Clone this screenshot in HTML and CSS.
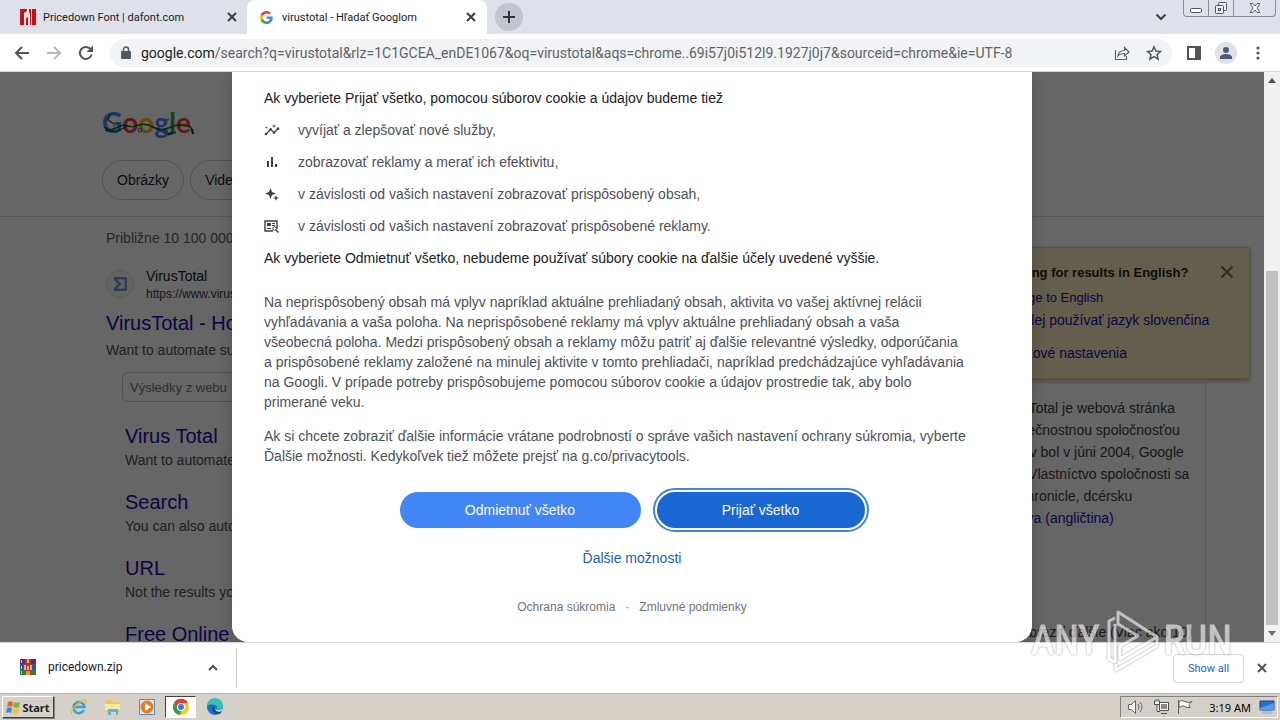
FILE: index.html
```html
<!DOCTYPE html>
<html lang="sk">
<head>
<meta charset="utf-8">
<title>virustotal - Hľadať Googlom</title>
<link rel="stylesheet" href="styles.css">
</head>
<body>
<header class="tabstrip">
  <div class="tab">
    <svg class="favicon" viewBox="0 0 16 16"><path fill="#c4101a" d="M0 0h16v16H0z"/><path fill="#fff" d="M4 4l3-2V0h2v3l1 2v11H8V8L6 9v7H4zM11 0h1v16h-1z" opacity=".9"/></svg>
    <span class="tab-title">Pricedown Font | dafont.com</span>
    <button class="icon-btn" aria-label="Close tab"><svg width="10" height="10" viewBox="0 0 10 10"><path d="M1 1l8 8M9 1l-8 8" stroke="#3c4043" stroke-width="2"/></svg></button>
  </div>
  <div class="tab tab-active">
    <svg class="favicon g-icon" viewBox="0 0 48 48"><path fill="#ea4335" d="M24 9.500c3.540 0 6.710 1.220 9.210 3.600l6.850-6.850C35.900 2.380 30.470 0 24 0 14.620 0 6.510 5.380 2.560 13.220l7.980 6.190C12.430 13.720 17.740 9.500 24 9.500z"/><path fill="#4285f4" d="M46.980 24.550c0-1.570-.15-3.090-.38-4.550H24v9.020h12.940c-.58 2.960-2.260 5.480-4.780 7.180l7.730 6c4.510-4.180 7.090-10.360 7.090-17.650z"/><path fill="#fbbc05" d="M10.530 28.590a14.500 14.500 0 010-9.180l-7.980-6.190a24 24 0 000 21.560z"/><path fill="#34a853" d="M24 48c6.480 0 11.930-2.130 15.890-5.810l-7.730-6c-2.150 1.450-4.920 2.300-8.160 2.300-6.260 0-11.570-4.220-13.470-9.910l-7.980 6.190C6.510 42.620 14.620 48 24 48z"/></svg>
    <span class="tab-title">virustotal - Hľadať Googlom</span>
    <button class="icon-btn" aria-label="Close tab"><svg width="10" height="10" viewBox="0 0 10 10"><path d="M1 1l8 8M9 1l-8 8" stroke="#3c4043" stroke-width="2"/></svg></button>
  </div>
  <button class="new-tab" aria-label="New tab"><svg width="12" height="12" viewBox="0 0 12 12"><path d="M6 0v12M0 6h12" stroke="#303338" stroke-width="2"/></svg></button>
  <div class="spacer"></div>
  <button class="icon-btn tab-search" aria-label="Search tabs"><svg width="12" height="8" viewBox="0 0 12 8"><path d="M1.500 1.500L6 6l4.500-4.500" fill="none" stroke="#3c4043" stroke-width="2"/></svg></button>
  <div class="win-controls">
    <button aria-label="Minimize"><svg width="14" height="14" viewBox="0 0 14 14"><rect x="1.500" y="7.500" width="11" height="4" rx="1" fill="#fff" stroke="#50545c"/></svg></button>
    <button aria-label="Restore"><svg width="14" height="14" viewBox="0 0 14 14"><g fill="#eef0f4" stroke="#50545c"><rect x="4.500" y="1.500" width="8" height="8" rx="1"/><rect x="1.500" y="4.500" width="8" height="8" rx="1"/><rect x="4.500" y="7.500" width="2" height="2"/></g></svg></button>
    <button class="wide" aria-label="Close"><svg width="14" height="14" viewBox="0 0 14 14"><path d="M2 2.500h3l2 2.500 2-2.500h3L9 7l3 4.500H9L7 9l-2 2.500H2L5 7z" fill="#f4f5f8" stroke="#60646c"/></svg></button>
  </div>
</header>

<nav class="toolbar">
  <button class="icon-btn nav-btn" aria-label="Back"><svg width="16" height="16" viewBox="0 0 16 16"><path d="M15 8H2.500M8 2L2 8l6 6" fill="none" stroke="#505357" stroke-width="2"/></svg></button>
  <button class="icon-btn nav-btn" aria-label="Forward"><svg width="16" height="16" viewBox="0 0 16 16"><path d="M1 8h12.500M8 2l6 6-6 6" fill="none" stroke="#b7b9bc" stroke-width="2"/></svg></button>
  <button class="icon-btn nav-btn" aria-label="Reload"><svg width="16" height="16" viewBox="0 0 16 16"><path d="M13.700 9.500A6 6 0 1112.300 3.800" fill="none" stroke="#505357" stroke-width="2"/><path d="M15 .5V7H8.500z" fill="#505357"/></svg></button>
  <div class="omnibox">
    <svg width="10" height="14" viewBox="0 0 10 14"><rect y="5" x="0" width="10" height="8" rx="1" fill="#55585c"/><path d="M2.500 6V3.500a2.500 2.500 0 015 0V6" fill="none" stroke="#55585c" stroke-width="1.500"/></svg>
    <span class="url"><b>google.com</b>/search?q=virustotal&amp;rlz=1C1GCEA_enDE1067&amp;oq=virustotal&amp;aqs=chrome..69i57j0i512l9.1927j0j7&amp;sourceid=chrome&amp;ie=UTF-8</span>
    <button class="icon-btn" aria-label="Share"><svg width="16" height="16" viewBox="0 0 16 16"><path d="M1.500 5v9.500h11V11M4 11c.5-4 3-5.500 6.500-5.500V2.500L15 7l-4.500 4V8.500C7.500 8.500 5.500 9 4 11z" fill="none" stroke="#5f6368" stroke-width="1.200"/></svg></button>
    <button class="icon-btn" aria-label="Bookmark"><svg width="16" height="16" viewBox="0 0 16 16"><path d="M8 1.800l1.900 4.300 4.600.4-3.500 3 1.100 4.600L8 11.700l-4.100 2.400L5 9.500l-3.500-3 4.600-.4z" fill="none" stroke="#505357" stroke-width="1.500"/></svg></button>
  </div>
  <button class="icon-btn side-btn" aria-label="Side panel"><svg width="14" height="14" viewBox="0 0 14 14"><path d="M1 1h12v12H1z" fill="#fff" stroke="#505357" stroke-width="2"/><path d="M8 0h6v14H8z" fill="#505357"/></svg></button>
  <button class="avatar" aria-label="Profile"><svg width="14" height="14" viewBox="0 0 14 14" fill="#4c5a78"><circle cx="7" cy="4" r="3"/><path d="M1 13v-2c0-2 4-3 6-3s6 1 6 3v2z"/></svg></button>
  <button class="icon-btn menu-btn" aria-label="Menu"><svg width="4" height="14" viewBox="0 0 4 14" fill="#505357"><circle cx="2" cy="2" r="1.600"/><circle cx="2" cy="7" r="1.600"/><circle cx="2" cy="12" r="1.600"/></svg></button>
</nav>

<main class="viewport">
  <div class="page">
    <div class="results-page">
      <div class="page-head">
        <div class="logo"><span class="c-b">G</span><span class="c-r">o</span><span class="c-y">o</span><span class="c-b">g</span><span class="c-g">l</span><span class="c-r">e</span>
          <svg class="garland" viewBox="0 0 94 36" fill="none"><path d="M2 23c5 5 10 2 16-1s10 3 16 0 12-2 17 1 12 3 18 0 10-2 19 0" stroke="#1f5a38" stroke-width="1.500"/><path d="M3 26c8 4 16 0 22-4M8 10l-2 6 6 4M88 22l3 7" stroke="#235c60" stroke-width="1.500"/><path d="M61 28c4 3 9 2 13 0" stroke="#3878a0" stroke-width="2"/><g fill="#e0a020"><circle cx="12" cy="22" r="1"/><circle cx="30" cy="23" r="1"/><circle cx="48" cy="23" r="1"/><circle cx="81" cy="22" r="1"/></g><circle cx="38" cy="26" r="2" stroke="#315cb0"/><path d="M66 31l5-3M90 25l1 5" stroke="#16351f" stroke-width="2"/></svg>
        </div>
        <div class="chips"><a href="#">Obrázky</a><a href="#">Videá</a></div>
      </div>
      <div class="columns">
        <div class="left">
          <p class="stats">Približne 10 100 000 výsledkov</p>
          <div class="site">
            <svg width="28" height="28" viewBox="0 0 28 28"><circle cx="14" cy="14" r="13.500" fill="#f8f8fa" stroke="#dadce0"/><path d="M8 7h13v14H8v-3l4-4-4-4zM11 9.500l4.500 4.500-4.500 4.500h7.500v-9z" fill="#7898cc" fill-rule="evenodd"/></svg>
            <div><div class="site-name">VirusTotal</div><div class="site-url">https://www.virustotal.com</div></div>
          </div>
          <a class="title" href="#">VirusTotal - Home</a>
          <p class="desc">Want to automate submissions?</p>
          <input class="site-search" type="text" placeholder="Výsledky z webu" aria-label="Výsledky z webu">
          <div class="sitelinks">
            <div><a class="title" href="#">Virus Total</a><p class="desc">Want to automate</p></div>
            <div><a class="title" href="#">Search</a><p class="desc">You can also automate</p></div>
            <div><a class="title" href="#">URL</a><p class="desc">Not the results you</p></div>
            <div><a class="title" href="#">Free Online</a></div>
          </div>
        </div>
        <aside class="right">
          <section class="lang-card">
            <div class="lang-text">
              <strong>Looking for results in English?</strong>
              <a class="small" href="#">Change to English</a>
              <a href="#">Naďalej používať jazyk slovenčina</a>
              <a class="last" href="#">Jazykové nastavenia</a>
            </div>
            <button class="icon-btn" aria-label="Zavrieť"><svg width="14" height="14" viewBox="0 0 14 14"><path d="M1.500 1.500l11 11M12.500 1.500l-11 11" stroke="#806f50" stroke-width="2"/></svg></button>
          </section>
          <section class="panel">
            <p>VirusTotal je webová stránka<br>bezpečnostnou spoločnosťou<br>Názov bol v júni 2004, Google<br>roku Vlastníctvo spoločnosti sa<br>na Chronicle, dcérsku<br><a href="#">Správa (angličtina)</a></p>
            <p class="more">Zobraziť ďalšie (Viac ako 10)</p>
          </section>
        </aside>
      </div>
    </div>
    <div class="scrim">
      <div class="dialog" role="dialog" aria-label="Súbory cookie">
        <p class="lead">Ak vyberiete Prijať všetko, pomocou súborov cookie a údajov budeme tiež</p>
        <ul>
          <li><svg width="16" height="16" viewBox="0 0 24 24"><path fill="#3c4043" d="M21 8c-1.450 0-2.260 1.440-1.930 2.510l-3.550 3.560c-.3-.09-.74-.09-1.040 0l-2.550-2.550C12.270 10.450 11.460 9 10 9c-1.450 0-2.270 1.440-1.930 2.520l-4.560 4.550C2.440 15.740 1 16.550 1 18c0 1.100.9 2 2 2 1.450 0 2.260-1.440 1.930-2.510l4.550-4.560c.3.090.74.090 1.040 0l2.550 2.550C12.730 16.550 13.540 18 15 18c1.450 0 2.270-1.440 1.930-2.520l3.560-3.550C21.560 12.260 23 11.450 23 10c0-1.100-.9-2-2-2zM15 9l.94-2.070L18 6l-2.060-.93L15 3l-.92 2.070L12 6l2.080.93zM3.500 11L4 9l2-.5L4 8l-.5-2L3 8l-2 .5L3 9z"/></svg>vyvíjať a zlepšovať nové služby,</li>
          <li><svg width="16" height="16" viewBox="0 0 16 16"><path fill="#3c4043" d="M3 7h2v6H3zM7 3h2v10H7zM11 10h2v3h-2z"/></svg>zobrazovať reklamy a merať ich efektivitu,</li>
          <li><svg width="16" height="16" viewBox="0 0 16 16"><path fill="#3c4043" d="M6.500 2L8 6l4 1.500L8 9l-1.500 4L5 9 1 7.500 5 6zM12 9l.8 2.200L15 12l-2.200.8L12 15l-.8-2.200L9 12l2.200-.8z"/></svg>v závislosti od vašich nastavení zobrazovať prispôsobený obsah,</li>
          <li><svg width="16" height="16" viewBox="0 0 16 16" fill="none" stroke="#3c4043"><path d="M9 13H1V3h12v8" stroke-width="1.400"/><path d="M3 5h4v3H3z" fill="#3c4043" stroke="none"/><path d="M8 5.500h3M8 7.500h3M3 10.500h4"/><circle cx="10.500" cy="10.500" r="1.800"/><path d="M12 12l2.500 2.500" stroke-width="1.500"/></svg>v závislosti od vašich nastavení zobrazovať prispôsobené reklamy.</li>
        </ul>
        <p class="lead">Ak vyberiete Odmietnuť všetko, nebudeme používať súbory cookie na ďalšie účely uvedené vyššie.</p>
        <p class="body-text first">Na neprispôsobený obsah má vplyv napríklad aktuálne prehliadaný obsah, aktivita vo vašej aktívnej relácii<br>vyhľadávania a vaša poloha. Na neprispôsobené reklamy má vplyv aktuálne prehliadaný obsah a vaša<br>všeobecná poloha. Medzi prispôsobený obsah a reklamy môžu patriť aj ďalšie relevantné výsledky, odporúčania<br>a prispôsobené reklamy založené na minulej aktivite v tomto prehliadači, napríklad predchádzajúce vyhľadávania<br>na Googli. V prípade potreby prispôsobujeme pomocou súborov cookie a údajov prostredie tak, aby bolo<br>primerané veku.</p>
        <p class="body-text">Ak si chcete zobraziť ďalšie informácie vrátane podrobností o správe vašich nastavení ochrany súkromia, vyberte<br>Ďalšie možnosti. Kedykoľvek tiež môžete prejsť na g.co/privacytools.</p>
        <div class="actions">
          <button class="pill reject">Odmietnuť všetko</button>
          <button class="pill accept">Prijať všetko</button>
        </div>
        <a class="more-options" href="#">Ďalšie možnosti</a>
        <div class="legal"><a href="#">Ochrana súkromia</a><span>·</span><a href="#">Zmluvné podmienky</a></div>
      </div>
    </div>
  </div>
  <div class="scrollbar">
    <svg width="8" height="5" viewBox="0 0 8 5"><path d="M0 5l4-5 4 5z" fill="#505050"/></svg>
    <div class="track"><div class="thumb"></div></div>
    <svg width="8" height="5" viewBox="0 0 8 5"><path d="M0 0l4 5 4-5z" fill="#707070"/></svg>
  </div>
</main>

<section class="shelf">
  <div class="download">
    <svg width="16" height="16" viewBox="0 0 16 16"><path fill="#7a2060" d="M0 0h16v5H0z"/><path fill="#2858a8" d="M0 5h16v6H0z"/><path fill="#28803c" d="M0 11h16v5H0z"/><path fill="#c43030" d="M5 0h6v16H5z"/><path fill="#e8b080" d="M4 6h2v5H4zM10 6h2v5h-2zM7 7h2v4H7zM7 0h2v4H7z"/><path fill="#d8a030" d="M6 12h4v4H6z"/><path fill="#d8c8b0" d="M1 1h1v3H1zM1 7h1v3H1zM1 12h1v3H1z"/></svg>
    <span>pricedown.zip</span>
    <button class="icon-btn" aria-label="Options"><svg width="10" height="7" viewBox="0 0 10 7"><path d="M1 6l4-4 4 4" fill="none" stroke="#505357" stroke-width="2"/></svg></button>
  </div>
  <button class="show-all">Show all</button>
  <button class="icon-btn" aria-label="Close downloads"><svg width="10" height="10" viewBox="0 0 10 10"><path d="M1 1l8 8M9 1l-8 8" stroke="#505357" stroke-width="2"/></svg></button>
</section>

<footer class="taskbar">
  <button class="start"><svg width="15" height="15" viewBox="0 0 15 15"><path fill="#e8602c" d="M2 2c2-1 3-1 5 0L6 7C4 6 3 6 1 7z"/><path fill="#78b83c" d="M8 2c2 1 4 1 6 0l-1 5c-2 1-4 1-6 0z"/><path fill="#3c88d8" d="M1 8c2-1 3-1 5 0l-1 5c-2-1-3-1-5 0z"/><path fill="#f4c030" d="M7 8c2 1 4 1 6 0l-1 5c-2 1-4 1-6 0z"/></svg>Start</button>
  <button class="task" aria-label="Internet Explorer"><svg width="18" height="18" viewBox="0 0 18 18" fill="none"><path d="M14 12a5.500 5.500 0 11.500-3H5" stroke="#38a0dc" stroke-width="2.500"/><path d="M2 16c-3-3 9-15 14-14 1 1 0 2-1 3" stroke="#e8b830" stroke-width="1.300"/></svg></button>
  <button class="task" aria-label="Explorer"><svg width="18" height="18" viewBox="0 0 18 18"><path fill="#e8c860" d="M1 4l1-2h5l1 2h8v10H1z"/><path fill="#f8e8a0" d="M1 6h15v6H1z"/><path fill="#68b0d8" d="M4 17v-6h10v6h-2v-3H7v3z"/></svg></button>
  <button class="task" aria-label="Media Player"><svg width="18" height="18" viewBox="0 0 18 18"><path fill="#d8e8f4" stroke="#5890c0" d="M1.500 1.500h15v15h-15z"/><circle cx="9" cy="9" r="6.500" fill="#ec7c18"/><path fill="#fff" d="M7 5l6 4-6 4z"/></svg></button>
  <button class="task task-active" aria-label="Chrome"><svg width="18" height="18" viewBox="0 0 18 18"><circle cx="9" cy="9" r="8" fill="#f8c820"/><path fill="#e04030" d="M2 5a8 8 0 0114 0H9L5.500 11z"/><path fill="#28a050" d="M2 5l4.500 7L9 13l-1 4A8 8 0 012 5z"/><circle cx="9" cy="9" r="4" fill="#fff"/><circle cx="9" cy="9" r="3" fill="#3c78e0"/></svg></button>
  <button class="task" aria-label="Edge"><svg width="18" height="18" viewBox="0 0 18 18"><circle cx="9" cy="9" r="8" fill="#1878c8"/><path fill="#38c0b0" d="M1 8a8 8 0 0116 0c0 4-6 4-6 2 1-3-5-5-10-2z"/><path fill="#144c98" d="M7 8c-3 4 0 8 5 8 2 0 3-1 4-3-4 2-8 0-7-3 0-1-1-2-2-2z"/><path fill="#d5d0c8" d="M10 8c-2 3 1 5 7 3l-1 2c-5 2-8-1-6-5z"/></svg></button>
  <div class="spacer"></div>
  <div class="tray">
    <svg width="18" height="16" viewBox="0 0 18 16" fill="none" stroke="#686868"><path d="M1.500 5.500h3l4-4v13l-4-4h-3z" fill="#fff"/><path d="M11 5q2 3 0 6M13 3q4 5 0 10"/></svg>
    <svg width="16" height="16" viewBox="0 0 16 16" fill="#fff" stroke="#505050"><path d="M6.500 3.500h9v8h-9zM8 14.500h6M1.500 1.500v4h5v-4M4 5.500v7h3M3 0v3M5 0v3"/><path d="M8 5h6v5H8z" fill="#888" stroke="none"/></svg>
    <svg width="16" height="16" viewBox="0 0 16 16" fill="#fff" stroke="#606060"><path d="M1.500 1v14M2 2.500q3-2 6 0t7 0l-3 3 1 3q-3 1-5-1t-6 1z"/></svg>
    <span>3:19 AM</span>
    <svg width="16" height="14" viewBox="0 0 16 14"><path d="M1 1h14v9H1z" fill="#2870d0" stroke="#184080"/><path d="M1 8L15 3v7H1z" fill="#50a0e8"/><path d="M4 11h8l2 3H2z" fill="#a8c0d8"/></svg>
  </div>
</footer>

<div class="watermark" aria-hidden="true"><span>ANY</span>
  <svg width="54" height="62" viewBox="0 0 54 62" fill="none" stroke="#fff" stroke-width="3" stroke-linejoin="round"><path d="M10 8l-6 3v38l6 3V14M13 2l39 25-37 22V36l18-10-20-12zM11 54v6l41-24v-8"/></svg>
  <span>RUN</span></div>
</body>
</html>
```

FILE: styles.css
```css
* { box-sizing: border-box; }
body {
  margin: 0;
  height: 100vh;
  display: flex;
  flex-direction: column;
  overflow: hidden;
  position: relative;
  font-family: "Liberation Sans", Arial, sans-serif;
  font-size: 14px;
  color: #202124;
}
button { border: 0; padding: 0; margin: 0; background: none; font: inherit; color: inherit; }
a { text-decoration: none; color: inherit; }
p, ul { margin: 0; padding: 0; }
svg { display: block; flex: none; }
.spacer { flex: 1; }
.icon-btn { flex: none; display: flex; align-items: center; justify-content: center; }

.tabstrip {
  height: 34px;
  flex: none;
  display: flex;
  align-items: center;
  background: #dee1e9;
  font-family: Roboto, sans-serif;
  font-size: 11px;
}
.tab { width: 247px; height: 34px; padding: 0 10px 0 20px; display: flex; align-items: center; gap: 7px; }
.tab-active { width: 240px; padding: 0 11px 0 13px; background: #fff; border-radius: 8px 8px 0 0; }
.tab-title { flex: 1; white-space: nowrap; }
.favicon { width: 16px; height: 16px; }
.g-icon { width: 13px; height: 13px; margin-right: 2px; }
.new-tab { width: 28px; height: 28px; margin-left: 8px; border-radius: 50%; background: #c2c5ce; display: flex; align-items: center; justify-content: center; }
.tab-search { margin-right: 16px; }
.win-controls { align-self: flex-start; height: 17px; margin-right: 4px; display: flex; border: 1px solid #888c96; border-top: 0; border-radius: 0 0 4px 4px; }
.win-controls button { width: 25px; display: flex; align-items: center; justify-content: center; border-right: 1px solid #888c96; }
.win-controls .wide { width: 41px; border-right: 0; }

.toolbar {
  height: 38px;
  flex: none;
  display: flex;
  align-items: center;
  padding: 0 14px;
  background: #fff;
  border-bottom: 1px solid #d4d6d9;
}
.nav-btn { width: 16px; margin-right: 16px; }
.omnibox { flex: 1; height: 28px; display: flex; align-items: center; gap: 16px; padding: 0 10px 0 11px; border-radius: 14px; background: #f1f3f4; }
.url { flex: 1; margin-left: -6px; font-family: Roboto, sans-serif; font-size: 14px; color: #5f6368; white-space: nowrap; }
.url b { font-weight: 400; color: #202124; }
.side-btn { margin: 0 14px 0 15px; }
.avatar { width: 22px; height: 22px; border-radius: 50%; background: #dde1e8; display: flex; align-items: center; justify-content: center; }
.menu-btn { width: 16px; margin: 0 0 0 13px; }

.viewport { flex: 1; min-height: 0; display: flex; }
.page { flex: 1; min-width: 0; position: relative; overflow: hidden; background: #fff; }
.page-head { height: 145px; padding: 32px 0 0 102px; border-bottom: 1px solid #dadce0; }
.logo { position: relative; width: 94px; height: 36px; font: 700 28px/36px Lato, sans-serif; }
.garland { position: absolute; inset: 0; }
.c-b { color: #4285f4; } .c-r { color: #ea4335; } .c-y { color: #fbbc05; } .c-g { color: #34a853; }
.chips { display: flex; gap: 6px; margin-top: 20px; }
.chips a { height: 40px; padding: 0 14px; line-height: 38px; border: 1px solid #c8cace; border-radius: 20px; }
.columns { display: flex; justify-content: space-between; padding: 0 14px 0 106px; white-space: nowrap; }
.left { width: 540px; }
.stats { margin-top: 11px; line-height: 20px; color: #5f6368; }
.site { display: flex; align-items: center; gap: 12px; margin-top: 18px; }
.site-name { line-height: 20px; }
.site-url { font-size: 12px; line-height: 16px; color: #3c4043; }
.title { display: block; font-size: 20px; line-height: 26px; color: #1a0dab; }
.site + .title { margin-top: 8px; }
.desc { line-height: 22px; color: #4d5156; }
.title + .desc { margin-top: 3px; }
.site-search { display: block; width: 280px; height: 30px; margin: 11px 0 0 16px; padding: 0 7px; border: 1px solid #c8cace; border-radius: 6px; background: #fff; font: 13px "Liberation Sans", sans-serif; }
.site-search::placeholder { color: #70757a; }
.sitelinks { display: flex; flex-direction: column; gap: 18px; padding: 21px 0 0 19px; }
.sitelinks .desc { margin-top: 0; }
.right { width: 270px; padding-top: 30px; }
.lang-card { height: 132px; display: flex; justify-content: space-between; padding: 17px 15px 0 16px; background: #f9edbe; border: 1px solid #f0d090; border-radius: 2px; box-shadow: 0 2px 4px rgba(0,0,0,.3); }
.lang-card .icon-btn { height: 14px; }
.lang-text { display: flex; flex-direction: column; }
.lang-text strong { font-size: 13px; line-height: 16px; }
.lang-text a { font-size: 14px; line-height: 20px; margin-top: 3px; color: #1a0dab; }
.lang-text .small { font-size: 13px; line-height: 18px; margin-top: 8px; }
.lang-text .last { margin-top: 13px; }
.panel { height: 320px; margin: 3px 44px 0 0; padding: 14px 0 0 16px; border: 1px solid #dadce0; line-height: 22px; color: #3c4043; }
.panel a { color: #1a0dab; }
.more { margin-top: 92px; padding-left: 16px; }

.scrim { position: absolute; inset: 0; display: flex; justify-content: center; background: rgba(0,0,0,.6); }
.dialog {
  width: 800px;
  padding: 16px 32px 0;
  display: flex;
  flex-direction: column;
  background: #fff;
  border-radius: 0 0 16px 16px;
  box-shadow: 0 4px 16px rgba(0,0,0,.2);
  white-space: nowrap;
  line-height: 20px;
}
.lead { color: #202124; }
ul { list-style: none; display: flex; flex-direction: column; gap: 12px; margin: 12px 0; color: #4d5156; }
li { display: flex; align-items: center; gap: 18px; }
.body-text { margin-top: 14px; color: #4d5156; }
.body-text.first { margin-top: 24px; }
.actions { display: flex; justify-content: center; gap: 16px; margin: 26px 0 20px 0; }
.pill { height: 36px; border-radius: 18px; color: #fff; }
.reject { width: 241px; background: #4285f4; }
.accept { width: 208px; background: #1967d2; outline: 2px solid #4285d8; outline-offset: 2px; }
.more-options { align-self: center; color: #1a5fb8; }
.legal { display: flex; justify-content: center; gap: 10px; margin-top: 29px; font-size: 12px; color: #70757a; }

.scrollbar { width: 16px; display: flex; flex-direction: column; align-items: center; padding: 6px 0; gap: 6px; background: #f1f1f1; }
.track { flex: 1; width: 12px; display: flex; align-items: flex-end; }
.thumb { width: 12px; height: 66%; background: #c1c1c1; }

.shelf { height: 51px; flex: none; display: flex; align-items: center; padding-right: 13px; gap: 13px; background: #fff; border-top: 1px solid #d4d6d9; font-family: Roboto, sans-serif; }
.download { width: 237px; height: 38px; margin-right: auto; padding: 0 18px 2px 20px; display: flex; align-items: center; gap: 12px; border-right: 1px solid #c8cace; font-size: 12px; }
.download span { flex: 1; }
.show-all { width: 71px; height: 29px; border: 1px solid #d4d6d9; border-radius: 4px; font-size: 11px; color: #1a5fc8; }

.taskbar { height: 27px; flex: none; display: flex; align-items: center; padding: 0 2px; background: #d5d0c8; border-top: 1px solid #b8b4ac; font-family: "Noto Sans", sans-serif; font-size: 11px; }
.start { width: 52px; height: 22px; margin-right: 8px; display: flex; align-items: center; justify-content: center; gap: 1px; font-weight: 700; border: 1px solid; border-color: #fff #404040 #404040 #fff; box-shadow: 1px 1px 0 #808080; }
.task { width: 34px; height: 22px; display: flex; align-items: center; justify-content: center; }
.task-active { width: 31px; margin: 0 2px 0 1px; background: #fff; border: 1px solid; border-color: #404040 #fff #fff #404040; }
.tray { height: 22px; display: flex; align-items: center; gap: 8px; padding: 0 2px 0 6px; border: 1px solid; border-color: #808080 #fff #fff #808080; color: #000; }
.tray span { margin-left: 8px; }

.watermark { position: absolute; right: 48px; bottom: 48px; display: flex; align-items: center; gap: 5px; opacity: .6; color: #fff; font: 40px/62px "Liberation Sans Narrow", "Roboto Condensed", Roboto, sans-serif; -webkit-text-stroke: 1px #fff; filter: drop-shadow(0 0 1px #666); pointer-events: none; }
```
